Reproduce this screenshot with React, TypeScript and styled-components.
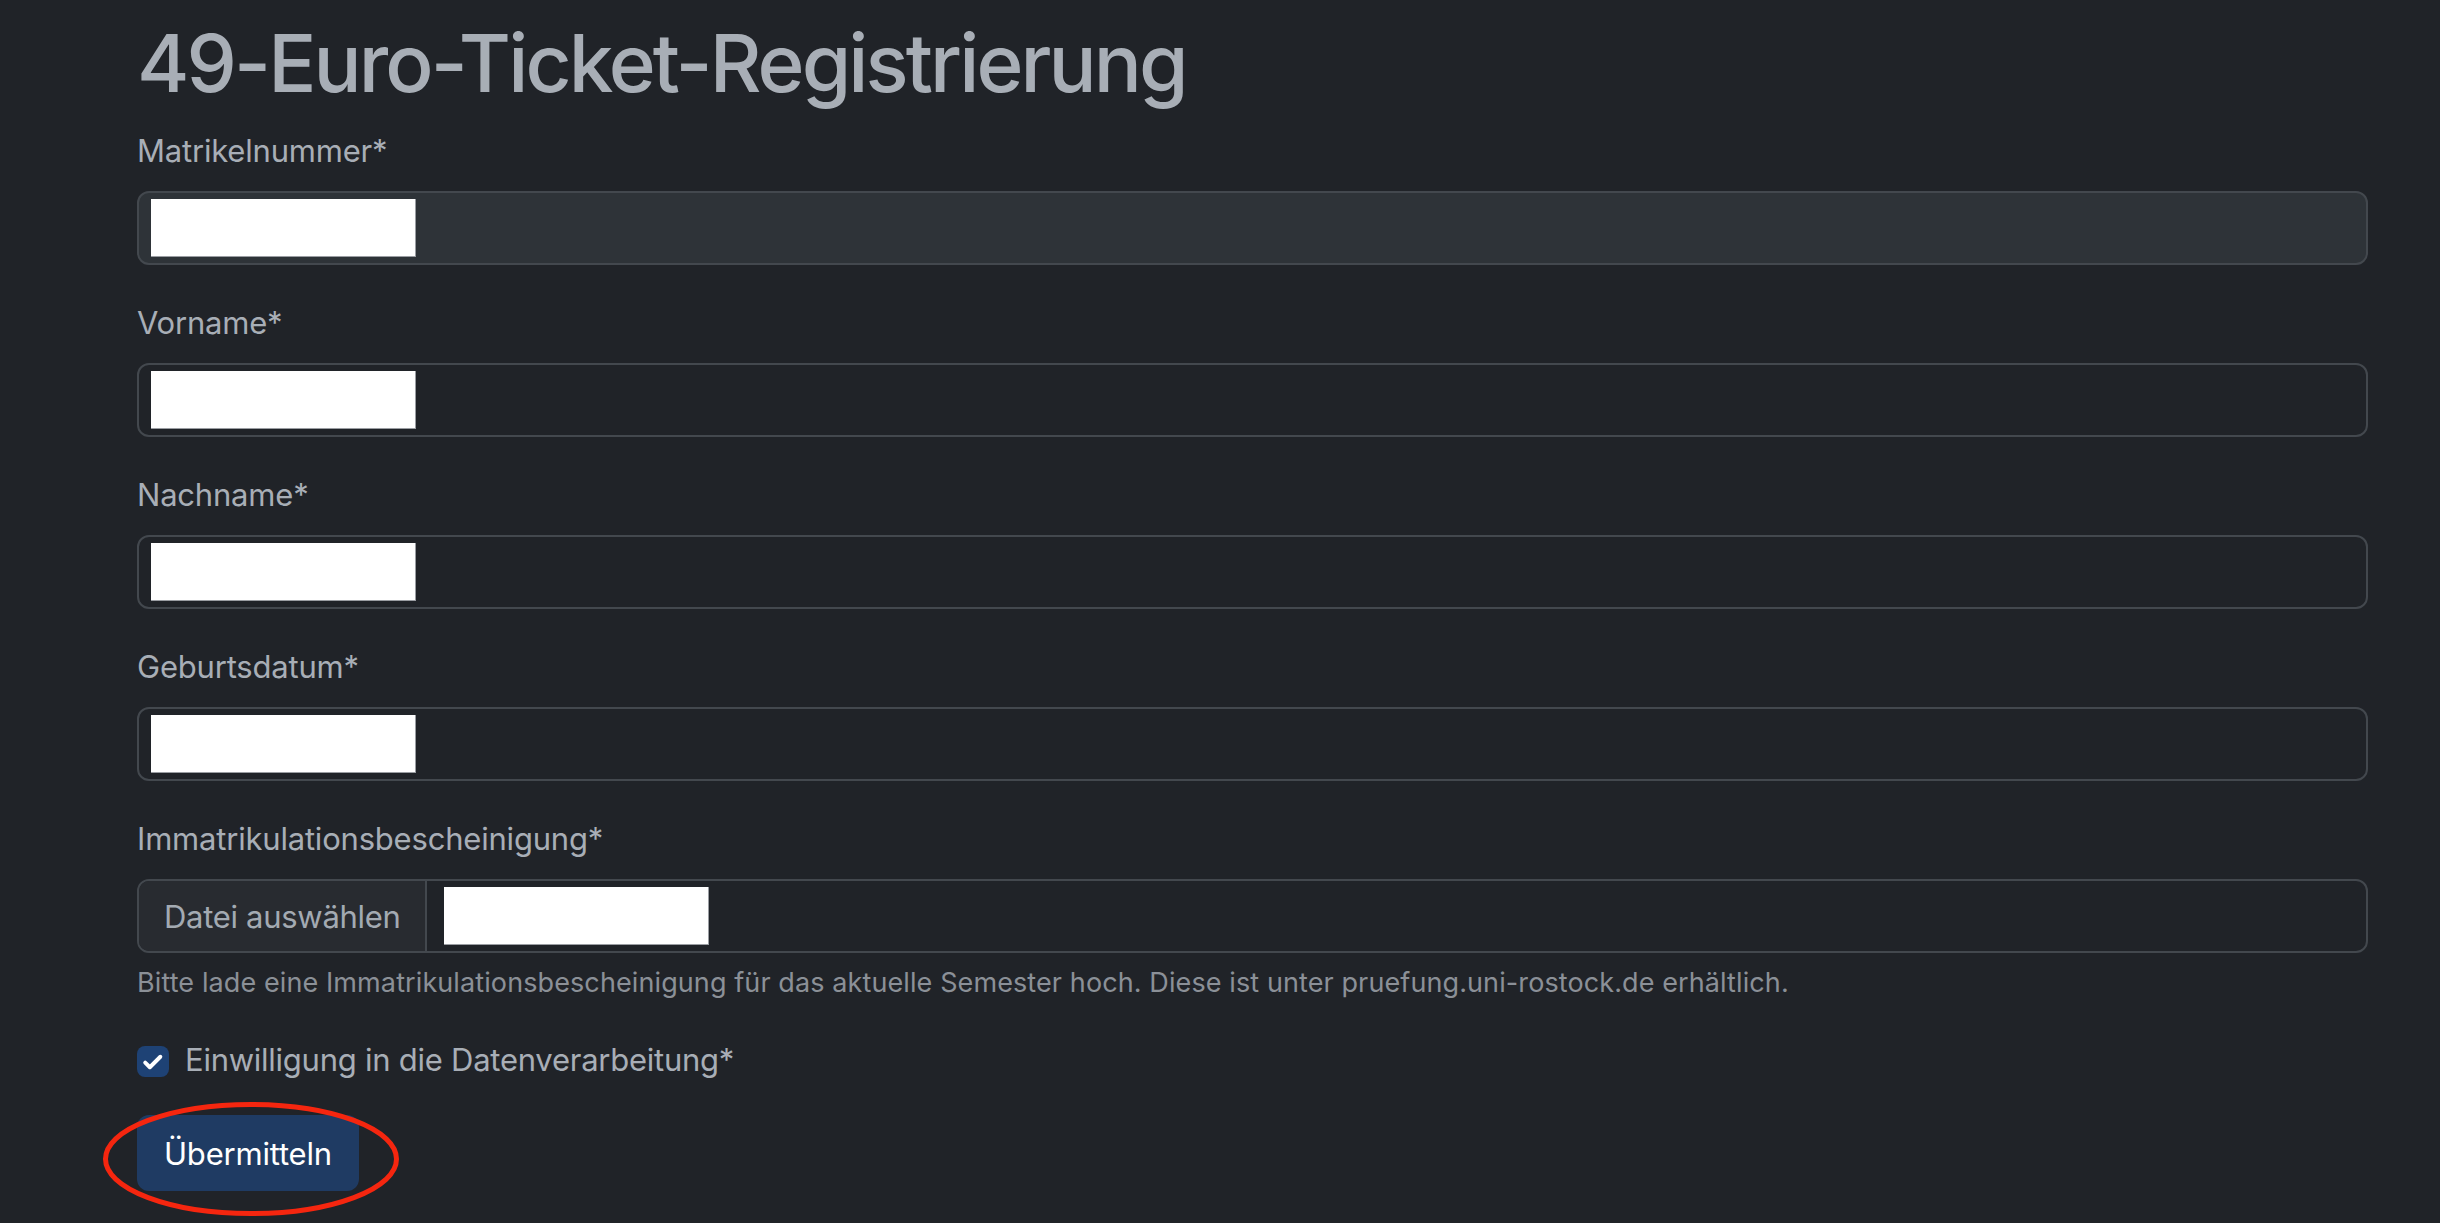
import React from "react";
import styled, { createGlobalStyle } from "styled-components";

const Global = createGlobalStyle`
  html, body {
    margin: 0;
    padding: 0;
    background: #202328;
  }
  body {
    font-family: Inter, "Noto Sans", "Liberation Sans", sans-serif;
    color: #a8aeb6;
  }
  * { box-sizing: border-box; }
`;

const Page = styled.main`
  min-height: 1223px;
  padding: 15px 72px 0 137px;
  background: #202328;
`;

const Title = styled.h1`
  margin: 0 0 17px 0;
  font-size: 80px;
  line-height: 96px;
  font-weight: 500;
  color: #a8aeb6;
  letter-spacing: -2.9px;
`;

const Field = styled.div`
  display: flex;
  flex-direction: column;
  margin-bottom: 35px;
`;

const Label = styled.label`
  font-size: 31px;
  line-height: 46px;
  margin-bottom: 17px;
  color: #a8aeb6;
  letter-spacing: -0.2px;
`;

const InputBox = styled.div<{ $readonly?: boolean }>`
  display: flex;
  align-items: center;
  height: 74px;
  padding: 0 12px;
  border: 2px solid #43484e;
  border-radius: 12px;
  background: ${(p) => (p.$readonly ? "#2e3338" : "#202328")};
`;

const Redaction = styled.span`
  display: block;
  width: 265px;
  height: 58px;
  background: #ffffff;
  border-bottom: 1px solid #9a9da2;
  border-right: 1px solid #9a9da2;
`;

const FileBox = styled.div`
  display: flex;
  align-items: stretch;
  height: 74px;
  border: 2px solid #43484e;
  border-radius: 12px;
  background: #202328;
  overflow: hidden;
`;

const FileButton = styled.span`
  display: flex;
  align-items: center;
  padding: 0 24px 0 25px;
  font-size: 31px;
  color: #a3aab2;
  background: #282b30;
  border-right: 2px solid #43484e;
  letter-spacing: -0.3px;
`;

const FileName = styled.span`
  display: flex;
  align-items: center;
  padding-left: 17px;
`;

const HelpText = styled.div`
  margin-top: 11px;
  font-size: 27px;
  line-height: 38px;
  color: #8b9097;
  letter-spacing: 0.1px;
`;

const CheckRow = styled.div`
  display: flex;
  align-items: flex-start;
  gap: 16px;
  margin-bottom: 32px;
`;

const CheckBox = styled.span`
  flex: none;
  width: 32px;
  height: 31px;
  margin-top: 9px;
  border-radius: 8px;
  background: #1e4275;
  display: flex;
  align-items: center;
  justify-content: center;
`;

const CheckLabel = styled.span`
  font-size: 31px;
  line-height: 46px;
  color: #a8aeb6;
  letter-spacing: -0.25px;
`;

const ButtonWrap = styled.div`
  position: relative;
  display: inline-block;
`;

const SubmitButton = styled.button`
  height: 76px;
  padding: 0 27px;
  border: none;
  border-radius: 12px;
  background: #1f3b63;
  color: #ffffff;
  font-family: Inter, "Noto Sans", "Liberation Sans", sans-serif;
  font-size: 31px;
  letter-spacing: -0.2px;
  cursor: pointer;
`;

const Ellipse = styled.svg`
  position: absolute;
  left: -34px;
  top: -13px;
  width: 296px;
  height: 114px;
  pointer-events: none;
  overflow: visible;
`;

const fields = ["Matrikelnummer*", "Vorname*", "Nachname*", "Geburtsdatum*"];

export default function App() {
  return (
    <>
      <Global />
      <Page>
        <Title>49-Euro-Ticket-Registrierung</Title>
        {fields.map((f, i) => (
          <Field key={f}>
            <Label>{f}</Label>
            <InputBox $readonly={i === 0}>
              <Redaction />
            </InputBox>
          </Field>
        ))}
        <Field>
          <Label>Immatrikulationsbescheinigung*</Label>
          <FileBox>
            <FileButton>Datei auswählen</FileButton>
            <FileName>
              <Redaction />
            </FileName>
          </FileBox>
          <HelpText>
            Bitte lade eine Immatrikulationsbescheinigung für das aktuelle Semester hoch. Diese ist unter
            pruefung.uni-rostock.de erhältlich.
          </HelpText>
        </Field>
        <CheckRow>
          <CheckBox>
            <svg width="30" height="30" viewBox="0 0 20 20">
              <path d="m4.8 10.4 3.1 3.1 7-7" fill="none" stroke="#ffffff" strokeWidth="2.6" strokeLinecap="round" strokeLinejoin="round" />
            </svg>
          </CheckBox>
          <CheckLabel>Einwilligung in die Datenverarbeitung*</CheckLabel>
        </CheckRow>
        <ButtonWrap>
          <SubmitButton>Übermitteln</SubmitButton>
          <Ellipse viewBox="0 0 296 114">
            <ellipse cx="148" cy="57" rx="145.5" ry="54.5" fill="none" stroke="#f5260f" strokeWidth="5" />
          </Ellipse>
        </ButtonWrap>
      </Page>
    </>
  );
}
